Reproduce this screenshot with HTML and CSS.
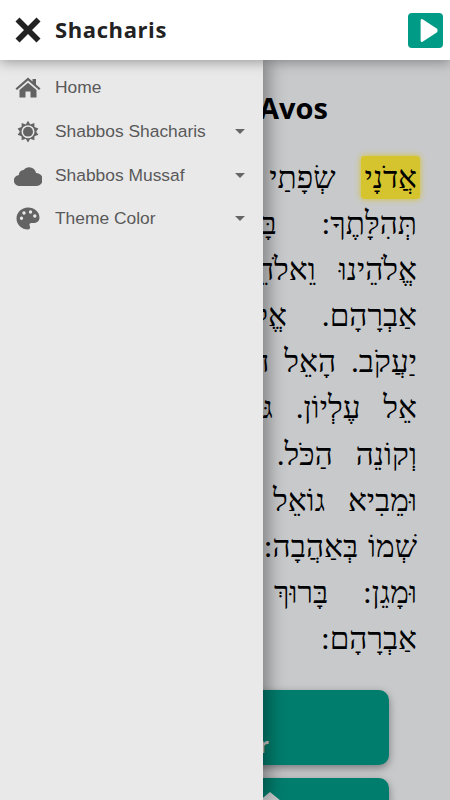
FILE: index.html
```html
<!DOCTYPE html>
<html lang="en">
<head>
    <meta charset="UTF-8">
    <meta name="viewport" content="width=device-width, initial-scale=1.0">
    <title>Shacharis</title>
    <link rel="stylesheet" href="styles.css">
</head>
<body>
<header class="topbar">
    <button class="close-btn" aria-label="Close menu">
        <svg viewBox="0 0 26 26" width="26" height="26"><path d="M4.500 .5 L13 9 L21.500 .5 L25.500 4.500 L17 13 L25.500 21.500 L21.500 25.500 L13 17 L4.500 25.500 L.5 21.500 L9 13 L.5 4.500 Z" fill="#222"/></svg>
    </button>
    <h1 class="app-title">Shacharis</h1>
    <button class="play-btn" aria-label="Play">
        <svg viewBox="0 0 36 36" width="35" height="35"><path d="M13 8 Q13 5.500 15 6.500 L29.500 16 Q31.500 18 29.500 20 L15 29.500 Q13 30.500 13 28 Z" fill="#fff"/></svg>
    </button>
</header>

<main class="page">
    <h2 class="page-title">Avos</h2>
    <div class="prayer" dir="rtl" lang="he">
        <p class="line gap-27"><span class="word-on">אֲדֹנָי</span> שְׂפָתַי</p>
        <p class="line gap-45">תְּהִלָּתֶךָ: בָּרוּךְ</p>
        <p class="line gap-23">אֱלֹהֵינוּ וֵאלֹהֵי</p>
        <p class="line gap-33">אַבְרָהָם. אֱלֹהֵי</p>
        <p class="line gap-15">יַעֲקֹב. הָאֵל הַגָּדוֹל</p>
        <p class="line gap-23">אֵל עֶלְיוֹן. גּוֹמֵל</p>
        <p class="line gap-23">וְקוֹנֵה הַכֹּל.</p>
        <p class="line gap-23">וּמֵבִיא גוֹאֵל</p>
        <p class="line gap-10">שְׁמוֹ בְּאַהֲבָה:</p>
        <p class="line gap-33">וּמָגֵן: בָּרוּךְ</p>
        <p class="line">אַבְרָהָם:</p>
    </div>
    <button class="big-btn big-btn-text">Chapter</button>
    <button class="big-btn big-btn-icon" aria-label="Back">
        <svg viewBox="0 0 24 20" width="24" height="20"><path d="M12 0 L23 9 H16 V20 H8 V9 H1 Z" fill="#fff"/></svg>
    </button>
</main>

<div class="dim"></div>

<nav class="drawer">
    <a class="nav-item" href="#">
        <svg class="nav-icon" viewBox="-1 -1.500 28 25"><path d="M13 1 L17.500 5 V2.500 H21 V8 L25.500 12 L24 13.500 L13 4 L2 13.500 L.5 12 Z M4.500 13.500 L13 6.200 L21.500 13.500 V21 H15.500 V15 H10.500 V21 H4.500 Z"/></svg>
        <span>Home</span>
    </a>
    <a class="nav-item" href="#">
        <svg class="nav-icon" viewBox="-2.500 -1 31 27.700"><path fill-rule="evenodd" d="M13 1 L15.500 5 L20 3.500 L20.200 8 L24.500 9.500 L22 13 L24.500 16.500 L20.200 18 L20 22.500 L15.500 21 L13 25 L10.500 21 L6 22.500 L5.800 18 L1.500 16.500 L4 13 L1.500 9.500 L5.800 8 L6 3.500 L10.500 5 Z M13 5.800 A7.200 7.200 0 1 0 13 20.200 A7.200 7.200 0 1 0 13 5.800 Z"/><circle cx="13" cy="13" r="5.500"/></svg>
        <span>Shabbos Shacharis</span>
        <i class="caret"></i>
    </a>
    <a class="nav-item" href="#">
        <svg class="nav-icon" viewBox="0 -2 28 25"><path d="M6 21 A5.500 5.500 0 0 1 4.800 10 A5.500 5.500 0 0 1 9.500 5 A7 7 0 0 1 22 8 A5 5 0 0 1 22.500 21 Z"/></svg>
        <span>Shabbos Mussaf</span>
        <i class="caret"></i>
    </a>
    <a class="nav-item" href="#">
        <svg class="nav-icon" viewBox="-2 -.5 28 25"><path fill-rule="evenodd" d="M12 1 C18.500 1 23.500 5.500 23.500 11 C23.500 15 20.500 16.500 17.500 16.500 H15.500 C13.500 16.500 13 18 13.800 19.500 C14.800 21.500 13.500 23 12 23 C5.500 23 .5 18 .5 12 C.5 6 5.500 1 12 1 Z M5.500 10 A1.700 1.700 0 1 0 5.500 13.400 A1.700 1.700 0 1 0 5.500 10 Z M8 4.800 A1.700 1.700 0 1 0 8 8.200 A1.700 1.700 0 1 0 8 4.800 Z M14.500 3.800 A1.700 1.700 0 1 0 14.500 7.200 A1.700 1.700 0 1 0 14.500 3.800 Z M18.800 7.800 A1.700 1.700 0 1 0 18.800 11.200 A1.700 1.700 0 1 0 18.800 7.800 Z"/></svg>
        <span>Theme Color</span>
        <i class="caret"></i>
    </a>
</nav>
</body>
</html>
```

FILE: styles.css
```css
* {
    box-sizing: border-box;
}
html, body {
    height: 100%;
}
body {
    margin: 0;
    overflow: hidden;
    background-color: #fff;
    font-family: "Liberation Sans", Arial, sans-serif;
}
.topbar {
    position: relative;
    z-index: 3;
    display: flex;
    align-items: center;
    height: 60px;
    padding: 0 7px 0 15px;
    background-color: #fff;
    box-shadow: 0 2px 12px rgba(0, 0, 0, 0.35);
}
.close-btn, .play-btn {
    display: flex;
    padding: 0;
    border: none;
    background: none;
}
.app-title {
    flex: 1;
    margin: -2px 0 0 14px;
    font-family: "Open Sans", sans-serif;
    font-size: 22px;
    font-weight: 700;
    letter-spacing: 0.6px;
    color: #222;
}
.play-btn {
    border-radius: 4px;
    background-color: #009b86;
}
.page {
    height: 740px;
    padding: 28px 33px 0;
    background-color: #fff;
}
.page-title {
    margin: 0 0 28px 226px;
    font-family: "Open Sans", sans-serif;
    font-size: 29px;
    font-weight: 700;
    color: #000;
}
.prayer {
    margin-bottom: 28px;
    font-family: "Liberation Serif", "DejaVu Serif", serif;
    font-size: 31.500px;
    color: #000;
}
.line {
    margin: 0;
    height: 46.100px;
    line-height: 46.100px;
    white-space: nowrap;
}
/* gap between words, less the 8px of the space itself */
.gap-10 { word-spacing: 2px; }
.gap-15 { word-spacing: 7px; }
.gap-23 { word-spacing: 15px; }
.gap-27 { word-spacing: 21px; }
.gap-33 { word-spacing: 27px; }
.gap-45 { word-spacing: 37px; }
/* highlighted word sits over the dim layer, it stays bright */
.word-on {
    position: relative;
    z-index: 2;
    margin: 0 -3px;
    padding: 4px 3px;
    border-radius: 3px;
    background-color: #d6c42e;
    box-shadow: 0 0 6px #d6c42e;
}
.big-btn {
    display: flex;
    justify-content: center;
    width: 328px;
    height: 75px;
    margin: 0 0 13px 28px;
    padding: 0;
    border: none;
    border-radius: 10px;
    background-color: #009e88;
    box-shadow: 0 3px 8px rgba(0, 0, 0, 0.4);
    font-family: "Open Sans", sans-serif;
    font-size: 22px;
    font-weight: 700;
    color: #fff;
}
.big-btn-text {
    align-items: flex-end;
    padding: 0 0 6px 0;
}
.big-btn-icon {
    align-items: flex-start;
    padding: 14px 0 0 90px;
}
.dim {
    position: absolute;
    inset: 60px 0 0;
    z-index: 1;
    background-color: rgba(0, 5, 14, 0.216);
}
.drawer {
    position: absolute;
    top: 60px;
    bottom: 0;
    left: 0;
    z-index: 2;
    width: 263px;
    padding-top: 6px;
    background-color: #e9e9e9;
    box-shadow: 6px 0 16px rgba(0, 0, 0, 0.35);
}
.nav-item {
    display: flex;
    align-items: center;
    height: 43.700px;
    padding: 0 18px 0 14px;
    font-size: 17.400px;
    color: #595959;
    text-decoration: none;
}
.nav-item span {
    flex: 1;
    margin-left: 13px;
}
.nav-icon {
    width: 28px;
    height: 25px;
    fill: #636363;
}
.caret {
    width: 0;
    height: 0;
    border-top: 5px solid #666;
    border-right: 5px solid transparent;
    border-left: 5px solid transparent;
}
```
